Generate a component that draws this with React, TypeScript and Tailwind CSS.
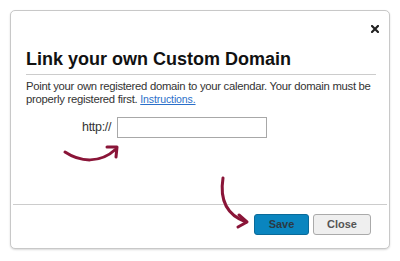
import React from 'react';

const font = { fontFamily: '"Liberation Sans", Arial, sans-serif' };

const CurveArrow = () => (
  <svg className="absolute left-[60px] top-[140px]" width="66" height="28" viewBox="0 0 66 28" fill="none">
    <path d="M5 12 C 20 22, 40 24, 56 9" stroke="#8a1538" strokeWidth="3" strokeLinecap="round" />
    <path d="M47 7 L57 7 L56 17" stroke="#8a1538" strokeWidth="3" strokeLinecap="round" strokeLinejoin="round" />
  </svg>
);

const DownArrow = () => (
  <svg className="absolute left-[214px] top-[172px]" width="40" height="60" viewBox="0 0 40 60" fill="none">
    <path d="M9 6 C 6 25, 10 42, 32 50" stroke="#8a1538" strokeWidth="3" strokeLinecap="round" />
    <path d="M25 43 L33 50 L24 55" stroke="#8a1538" strokeWidth="3" strokeLinecap="round" strokeLinejoin="round" />
  </svg>
);

const App = () => {
  return (
    <div className="relative h-[261px] w-[400px] bg-white" style={font}>
      <div className="absolute left-[10px] top-[10px] flex h-[239px] w-[380px] flex-col rounded-[5px] border border-[#c8c8c8] bg-white shadow-[0_1px_2px_rgba(0,0,0,0.15)]">
        <div className="flex h-[28px] justify-end pr-[10px] pt-[14px]">
          {/* close x */}
          <svg width="8" height="8" viewBox="0 0 8 8">
            <path d="M1 1 L7 7 M7 1 L1 7" stroke="#222" strokeWidth="2.2" strokeLinecap="square" />
          </svg>
        </div>
        <div className="px-[15px] pr-[13px] pt-[9px]">
          <h1 className="border-b border-[#cccccc] pb-[4px] text-[18px] font-bold leading-[22px] text-[#111]">
            Link your own Custom Domain
          </h1>
          <p className="mt-[5px] text-[11.3px] leading-[13px] tracking-[-0.28px] text-[#333]">
            <span className="whitespace-nowrap">Point your own registered domain to your calendar. Your domain must be</span>
            <br />
            properly registered first.{' '}
            <a className="text-[10.5px] tracking-[-0.1px] text-[#2a6fc9] underline">Instructions.</a>
          </p>
          <div className="mt-[11px] flex items-center pl-[56px]">
            <span className="w-[35px] shrink-0 text-[12.5px] tracking-[-0.3px] text-[#333]">http://</span>
            <input className="h-[21px] w-[150px] border border-[#a8a8a8] bg-white" />
          </div>
        </div>
        <div className="mt-auto mx-[2px] border-t border-[#cccccc] pb-[13px] pt-[9px] pr-[16px]">
          <div className="flex justify-end gap-[4px]">
            <button className="h-[21px] w-[55px] rounded-[3px] border border-[#0a6a99] bg-[#0a85bf] text-[11px] font-bold text-[#2b3a44]">
              Save
            </button>
            <button className="h-[21px] w-[58px] rounded-[3px] border border-[#aaaaaa] bg-[#efefef] text-[11px] font-bold text-[#555]">
              Close
            </button>
          </div>
        </div>
      </div>
      <CurveArrow />
      <DownArrow />
    </div>
  );
};

export default App;
